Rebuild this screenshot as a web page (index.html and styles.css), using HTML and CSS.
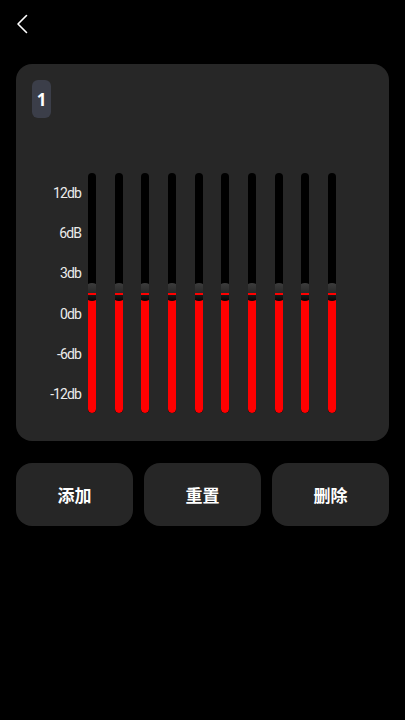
FILE: index.html
```html
<!DOCTYPE html>
<html lang="zh">
<head>
<meta charset="utf-8">
<link rel="stylesheet" href="styles.css">
</head>
<body>
<div class="page">
  <header class="topbar">
    <svg class="back" width="12" height="20" viewBox="0 0 12 20"><path d="M10.5 1.5 L2 10 L10.5 18.5" fill="none" stroke="#fff" stroke-width="1.6" stroke-linecap="round" stroke-linejoin="round"/></svg>
  </header>
  <section class="card">
    <div class="badge">1</div>
    <div class="chart">
      <div class="labels">
        <span>12db</span><span>6dB</span><span>3db</span><span>0db</span><span>-6db</span><span>-12db</span>
      </div>
      <div class="bars">
        <div class="track"><div class="fill"></div><div class="thumb"></div></div>
        <div class="track"><div class="fill"></div><div class="thumb"></div></div>
        <div class="track"><div class="fill"></div><div class="thumb"></div></div>
        <div class="track"><div class="fill"></div><div class="thumb"></div></div>
        <div class="track"><div class="fill"></div><div class="thumb"></div></div>
        <div class="track"><div class="fill"></div><div class="thumb"></div></div>
        <div class="track"><div class="fill"></div><div class="thumb"></div></div>
        <div class="track"><div class="fill"></div><div class="thumb"></div></div>
        <div class="track"><div class="fill"></div><div class="thumb"></div></div>
        <div class="track"><div class="fill"></div><div class="thumb"></div></div>
      </div>
    </div>
  </section>
  <div class="actions">
    <button class="btn">添加</button>
    <button class="btn">重置</button>
    <button class="btn">删除</button>
  </div>
</div>
</body>
</html>
```
FILE: styles.css
```css
* { box-sizing: border-box; }
html, body { margin: 0; padding: 0; background: #000; }
body { width: 405px; height: 720px; overflow: hidden; font-family: Roboto, "Noto Sans", "Noto Sans CJK SC", sans-serif; color: #fff; }
.page { padding: 0 16px; }
.topbar { height: 64px; padding-top: 14px; display: flex; align-items: flex-start; }
.back { display: block; margin-left: 0; }
.card { background: #272727; border-radius: 16px; padding: 16px 16px 28px 16px; height: 377px; }
.badge { width: 19px; height: 38px; border-radius: 6px; background: #3b3e49; display: flex; align-items: center; justify-content: center; font-weight: 700; font-size: 17px; font-family: "Open Sans", Roboto, sans-serif; }
.chart { margin-top: 55px; display: flex; align-items: flex-start; }
.labels { width: 50px; display: flex; flex-direction: column; align-items: flex-end; }
.labels span { height: 40.2px; line-height: 40.2px; font-size: 14px; letter-spacing: -0.9px; padding-right: 1px; color: #ececec; }
.bars { margin-left: 6px; display: flex; gap: 18.67px; }
.track { position: relative; width: 8px; height: 240px; background: #000; border-radius: 4px; overflow: hidden; }
.fill { position: absolute; left: 0; right: 0; bottom: 0; height: 113px; background: #ff0000; border-radius: 0 0 4px 4px; }
.thumb { position: absolute; left: -5px; top: 110px; width: 18px; height: 18px; border-radius: 50%;
  background: linear-gradient(to bottom, #3c3c3c 0%, #2a2a2a 55%, #ff0000 55%, #ff0000 66%, #1a1a1a 66%, #050505 100%); }
.actions { margin-top: 22px; display: flex; gap: 11px; }
.btn { flex: 1; height: 63px; border: 0; border-radius: 16px; background: #262626; color: #fff; font-family: "Noto Sans CJK SC", sans-serif; font-weight: 700; font-size: 17px; padding: 0; }
```
